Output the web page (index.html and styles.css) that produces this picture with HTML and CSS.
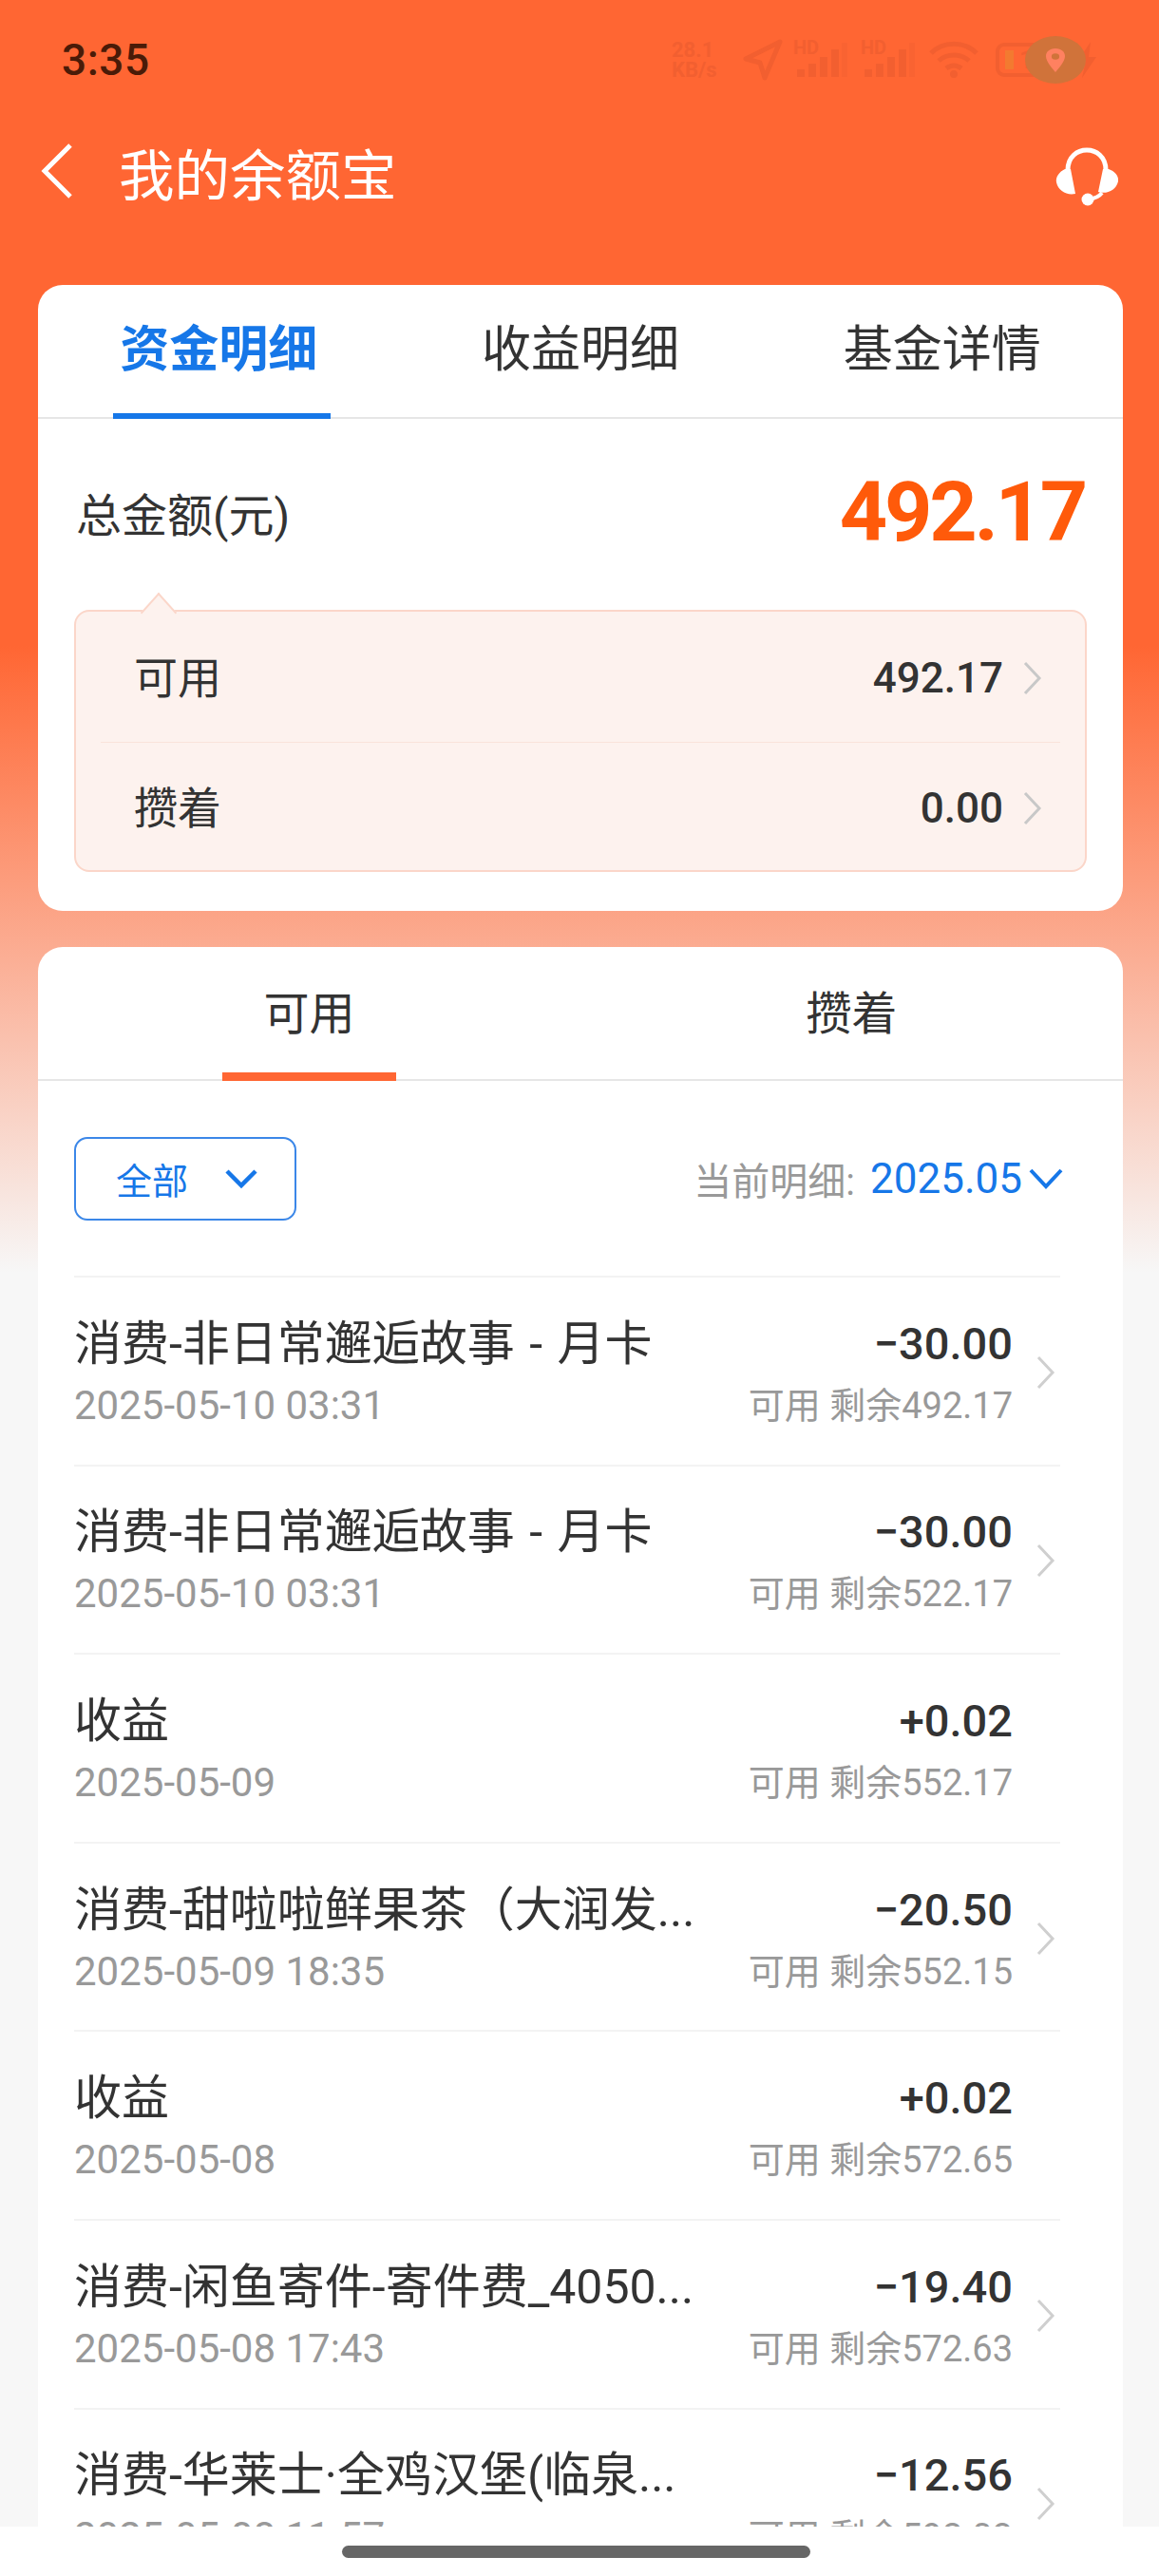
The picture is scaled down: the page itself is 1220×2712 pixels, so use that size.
FILE: index.html
```html
<!doctype html>
<html>
    <head>
        <meta charset="utf-8">
        <title>我的余额宝</title>
        <link rel="stylesheet" href="styles.css">
    </head>
    <body>
        <div class="page">
            <!-- status bar -->
            <div class="status">
                <span class="time">3:35</span>
                <div class="status-icons">
                    <div class="speed"><span class="speed-line">28.1</span><span class="speed-line">KB/s</span></div>
                    <svg width="42" height="44" viewBox="0 0 42 44"><path d="M39 3 3 21l15 4 5 16z" fill="none" stroke="currentColor" stroke-width="5" stroke-linejoin="round"/></svg>
                    <div class="signal">
                        <span class="hd">HD</span>
                        <svg width="58" height="40" viewBox="0 0 58 40"><path d="M4 30h8v8H4zM16 24h8v14h-8zM28 17h8v21h-8zM40 9h8v29h-8z" fill="currentColor"/><path d="M51 2h6v36h-6z" fill="currentColor" opacity=".45"/></svg>
                    </div>
                    <div class="signal">
                        <span class="hd">HD</span>
                        <svg width="58" height="40" viewBox="0 0 58 40"><path d="M4 30h8v8H4zM16 24h8v14h-8zM28 17h8v21h-8zM40 9h8v29h-8z" fill="currentColor"/><path d="M51 2h6v36h-6z" fill="currentColor" opacity=".45"/></svg>
                    </div>
                    <svg width="54" height="40" viewBox="0 0 54 40"><path d="M3 13C16 0 38 0 51 13M11 21c9-8 23-8 32 0M19 29c5-4 11-4 16 0" fill="none" stroke="currentColor" stroke-width="5"/><circle cx="27" cy="35" r="4" fill="currentColor"/></svg>
                    <div class="battery"><i class="battery-fill"></i><span>18</span></div>
                    <svg width="22" height="38" viewBox="0 0 22 38"><path d="M15 0 2 20h8L6 38l15-22h-8z" fill="currentColor"/></svg>
                </div>
                <div class="location">
                    <svg width="20" height="25" viewBox="0 0 22 34" preserveAspectRatio="none"><path fill-rule="evenodd" d="M11 0C4 0 0 5 0 11c0 8 7 17 11 23 4-6 11-15 11-23C22 5 18 0 11 0zm0 7a4.500 4.500 0 1 1 0 9 4.500 4.500 0 0 1 0-9z" fill="#ff8160"/></svg>
                </div>
            </div>

            <!-- title bar -->
            <div class="nav">
                <svg class="back" width="36" height="60" viewBox="0 0 36 60"><path d="M32 3 5 30l27 27" fill="none" stroke="#fff" stroke-width="5"/></svg>
                <span class="nav-title">我的余额宝</span>
                <svg class="service" width="68" height="68" viewBox="0 0 68 68">
                    <path d="M14 30C14 2 54 2 54 30" fill="none" stroke="#fff" stroke-width="5"/>
                    <path d="M11 29h6l5 26c-9 2-18-3-20-12-1-6 3-11 9-14zM57 29h-6l-5 24c9 3 19-2 21-11 1-6-4-11-10-13z" fill="#fff"/>
                    <path d="M50 54c-3 4-8 6-14 7" fill="none" stroke="#fff" stroke-width="4"/>
                    <circle cx="35" cy="61" r="6.500" fill="#fff"/>
                </svg>
            </div>

            <!-- summary card -->
            <div class="card card-top">
                <div class="tabs">
                    <div class="tab tab-on">资金明细</div>
                    <div class="tab">收益明细</div>
                    <div class="tab">基金详情</div>
                </div>
                <div class="total">
                    <span class="total-label">总金额(元)</span>
                    <span class="total-num">492.17</span>
                </div>
                <div class="panel">
                    <div class="panel-row">
                        <span class="panel-label">可用</span>
                        <span class="panel-num">492.17</span>
                        <svg class="arrow" width="22" height="36" viewBox="0 0 22 36"><path d="M3 2 18 18 3 34" fill="none" stroke="#c8c8c8" stroke-width="3"/></svg>
                    </div>
                    <div class="panel-row">
                        <span class="panel-label">攒着</span>
                        <span class="panel-num">0.00</span>
                        <svg class="arrow" width="22" height="36" viewBox="0 0 22 36"><path d="M3 2 18 18 3 34" fill="none" stroke="#c8c8c8" stroke-width="3"/></svg>
                    </div>
                </div>
            </div>

            <!-- detail card -->
            <div class="card">
                <div class="subtabs">
                    <div class="subtab"><span class="subtab-text subtab-on">可用</span></div>
                    <div class="subtab"><span class="subtab-text">攒着</span></div>
                </div>
                <div class="filter">
                    <div class="filter-btn">
                        <span>全部</span>
                        <svg width="36" height="22" viewBox="0 0 36 22"><path d="M3 3 18 18 33 3" fill="none" stroke="#1677e8" stroke-width="4.500"/></svg>
                    </div>
                    <div class="month">
                        <span class="month-label">当前明细:</span>
                        <span class="month-num">2025.05</span>
                        <svg width="38" height="24" viewBox="0 0 38 24"><path d="M3 3 19 20 35 3" fill="none" stroke="#1677e8" stroke-width="4"/></svg>
                    </div>
                </div>
                <div class="list">
                    <div class="row">
                        <div class="row-left"><div class="row-title">消费-非日常邂逅故事 - 月卡</div><div class="row-date">2025-05-10 03:31</div></div>
                        <div class="row-right"><div class="row-num">−30.00</div><div class="row-rest">可用 剩余492.17</div></div>
                        <svg class="arrow" width="22" height="36" viewBox="0 0 22 36"><path d="M3 2 18 18 3 34" fill="none" stroke="#cfcfcf" stroke-width="3"/></svg>
                    </div>
                    <div class="row">
                        <div class="row-left"><div class="row-title">消费-非日常邂逅故事 - 月卡</div><div class="row-date">2025-05-10 03:31</div></div>
                        <div class="row-right"><div class="row-num">−30.00</div><div class="row-rest">可用 剩余522.17</div></div>
                        <svg class="arrow" width="22" height="36" viewBox="0 0 22 36"><path d="M3 2 18 18 3 34" fill="none" stroke="#cfcfcf" stroke-width="3"/></svg>
                    </div>
                    <div class="row">
                        <div class="row-left"><div class="row-title">收益</div><div class="row-date">2025-05-09</div></div>
                        <div class="row-right"><div class="row-num">+0.02</div><div class="row-rest">可用 剩余552.17</div></div>
                        <div class="arrow-gap"></div>
                    </div>
                    <div class="row">
                        <div class="row-left"><div class="row-title">消费-甜啦啦鲜果茶（大润发...</div><div class="row-date">2025-05-09 18:35</div></div>
                        <div class="row-right"><div class="row-num">−20.50</div><div class="row-rest">可用 剩余552.15</div></div>
                        <svg class="arrow" width="22" height="36" viewBox="0 0 22 36"><path d="M3 2 18 18 3 34" fill="none" stroke="#cfcfcf" stroke-width="3"/></svg>
                    </div>
                    <div class="row">
                        <div class="row-left"><div class="row-title">收益</div><div class="row-date">2025-05-08</div></div>
                        <div class="row-right"><div class="row-num">+0.02</div><div class="row-rest">可用 剩余572.65</div></div>
                        <div class="arrow-gap"></div>
                    </div>
                    <div class="row">
                        <div class="row-left"><div class="row-title">消费-闲鱼寄件-寄件费_4050...</div><div class="row-date">2025-05-08 17:43</div></div>
                        <div class="row-right"><div class="row-num">−19.40</div><div class="row-rest">可用 剩余572.63</div></div>
                        <svg class="arrow" width="22" height="36" viewBox="0 0 22 36"><path d="M3 2 18 18 3 34" fill="none" stroke="#cfcfcf" stroke-width="3"/></svg>
                    </div>
                    <div class="row">
                        <div class="row-left"><div class="row-title">消费-华莱士·全鸡汉堡(临泉...</div><div class="row-date">2025-05-08 11:57</div></div>
                        <div class="row-right"><div class="row-num">−12.56</div><div class="row-rest">可用 剩余592.03</div></div>
                        <svg class="arrow" width="22" height="36" viewBox="0 0 22 36"><path d="M3 2 18 18 3 34" fill="none" stroke="#cfcfcf" stroke-width="3"/></svg>
                    </div>
                </div>
            </div>

            <!-- gesture bar -->
            <div class="home-bar"><i class="home-pill"></i></div>
        </div>
    </body>
</html>
```

FILE: styles.css
```css
*{margin:0;padding:0;box-sizing:border-box;}
html,body{height:2712px;overflow:hidden;}
body{
    font-family:Roboto,"Noto Sans CJK SC",sans-serif;
    color:#333;
    background:#f7f7f7;
}
.page{
    position:relative;
    height:2712px;
    overflow:hidden;
    padding-bottom:52px;
    background:linear-gradient(#ff6633 0,#ff6633 680px,#f7f7f7 1340px);
}

/* status bar */
.status{
    position:relative;
    height:125px;
    padding:0 65px;
    display:flex;
    justify-content:space-between;
    align-items:center;
}
.time{
    font-size:46px;
    font-weight:500;
    letter-spacing:.5px;
    color:#4a1b08;
}
.status-icons{
    display:flex;
    align-items:center;
    gap:11px;
    color:#f25f30;
}
.speed{
    width:60px;
    margin-right:4px;
}
.speed-line{
    display:block;
    height:21px;
    font-size:22px;
    line-height:21px;
    font-weight:700;
}
.signal{
    position:relative;
    width:60px;
    height:40px;
}
.hd{
    position:absolute;
    left:0;
    top:-5px;
    font-size:20px;
    font-weight:700;
}
.battery{
    width:74px;
    height:36px;
    border:4px solid #f25f30;
    border-radius:9px;
    display:flex;
    align-items:center;
    padding-left:6px;
    gap:6px;
    font-size:26px;
    font-weight:500;
    margin-left:6px;
}
.battery-fill{
    width:9px;
    height:20px;
    background:#f37a30;
}
.location{
    position:absolute;
    left:1079px;
    top:38px;
    width:64px;
    height:50px;
    border-radius:50%;
    background:#d0733a;
    display:flex;
    align-items:center;
    justify-content:center;
}

/* title bar */
.nav{
    height:175px;
    padding:0 37px 65px 42px;
    display:flex;
    align-items:center;
}
.back{margin-right:47px;}
.nav-title{
    flex:1;
    font-size:58.500px;
    color:#fff;
}
.service{margin-top:5px;margin-right:5px;}

/* cards */
.card{
    margin:0 38px 0 40px;
    background:#fff;
    border-radius:26px;
    overflow:hidden;
}
.card-top{
    height:659px;
    margin-bottom:38px;
}
.tabs{
    height:141px;
    display:flex;
    border-bottom:2px solid #e6e6e6;
}
.tab{
    flex:1;
    font-size:52px;
    line-height:138px;
    text-align:center;
    position:relative;
}
.tab-on{
    color:#1677e8;
    font-weight:700;
}
.tab-on:after{
    content:"";
    position:absolute;
    left:79px;
    bottom:-2px;
    width:229px;
    height:6px;
    background:#1677e8;
}
.total{
    height:201px;
    padding:0 40px 6px;
    display:flex;
    justify-content:space-between;
    align-items:center;
}
.total-label{font-size:48px;}
.total-num{
    font-size:88px;
    font-weight:700;
    color:#ff5a0a;
    letter-spacing:-3.300px;
}
.panel{
    position:relative;
    margin:0 38px;
    height:276px;
    padding:0 26px;
    background:#fdf2ee;
    border:2px solid #fbd6c9;
    border-radius:16px;
}
.panel:before{
    content:"";
    position:absolute;
    left:72px;
    top:-14px;
    width:28px;
    height:28px;
    background:#fdf2ee;
    border-top:2px solid #fbd6c9;
    border-left:2px solid #fbd6c9;
    transform:scaleX(.9) rotate(45deg);
}
.panel-row{
    height:137px;
    display:flex;
    align-items:center;
    padding:2px 18px 0 35px;
}
.panel-row+.panel-row{border-top:1px solid #f9e3db;}
.panel-label{
    flex:1;
    font-size:46px;
    margin-top:-8px;
}
.panel-num{
    font-size:44px;
    font-weight:500;
    margin-right:20px;
}

/* second tabs */
.subtabs{
    height:141px;
    display:flex;
    border-bottom:2px solid #e6e6e6;
}
.subtab{
    flex:1;
    display:flex;
    justify-content:center;
}
.subtab-text{
    width:183px;
    height:141px;
    font-size:48px;
    line-height:142px;
    text-align:center;
}
.subtab-on{border-bottom:9px solid #ff6633;}

/* filter row */
.filter{
    height:205px;
    padding:0 62px 0 38px;
    display:flex;
    justify-content:space-between;
    align-items:center;
}
.filter-btn{
    width:234px;
    height:88px;
    padding:0 38px 0 42px;
    border:2px solid #3b87e8;
    border-radius:14px;
    display:flex;
    justify-content:space-between;
    align-items:center;
    font-size:38px;
    color:#1677e8;
}
.month{
    display:flex;
    align-items:center;
}
.month-label{
    font-size:40px;
    color:#999;
    margin-right:16px;
}
.month-num{
    font-size:44px;
    color:#1677e8;
    margin-right:6px;
}

/* list */
.list{margin:0 66px 0 38px;}
.row{
    height:198.600px;
    border-top:2px solid #f3f3f3;
    padding-top:3px;
    display:flex;
    align-items:center;
}
.row-left{flex:1;}
.row-title{
    font-size:50px;
    line-height:60px;
    margin-bottom:10px;
    white-space:nowrap;
    word-spacing:3px;
}
.row-date{
    font-size:42px;
    line-height:50px;
    color:#999;
}
.row-right{text-align:right;}
.row-num{
    font-size:47px;
    font-weight:500;
    line-height:60px;
    margin-bottom:10px;
}
.row-rest{
    font-size:38px;
    line-height:50px;
    color:#999;
}
.arrow{flex:none;}
.row .arrow{margin-left:24px;margin-right:4px;}
.arrow-gap{width:50px;}

/* gesture bar */
.home-bar{
    position:absolute;
    left:0;
    right:0;
    bottom:0;
    height:52px;
    background:#fff;
    display:flex;
    justify-content:center;
    padding:20px 8px 0 0;
}
.home-pill{
    width:493px;
    height:13px;
    border-radius:7px;
    background:#666;
}
```
